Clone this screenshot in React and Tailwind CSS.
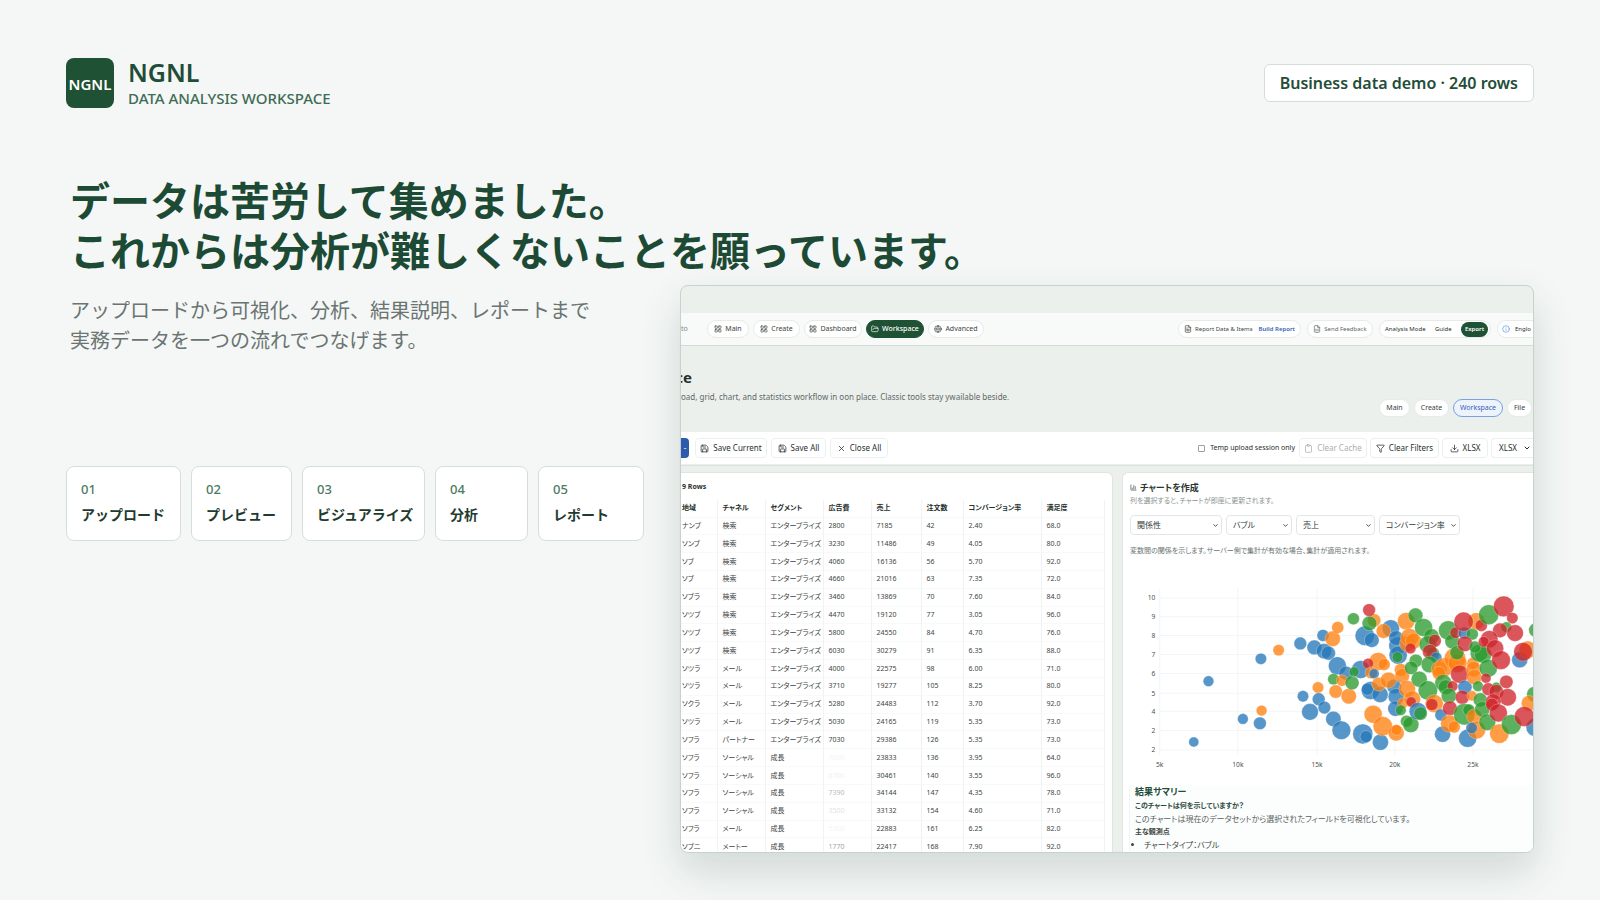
import { LayoutGrid, FolderOpen, Globe, FileText, FileSpreadsheet, Save, X, Clipboard, Funnel, Download, ChevronDown, ChartColumn, Info } from "lucide-react"

const steps = [
    { no: "01", label: "アップロード", width: "w-[115px]" },
    { no: "02", label: "プレビュー", width: "w-[101px]" },
    { no: "03", label: "ビジュアライズ", width: "w-[123px]" },
    { no: "04", label: "分析", width: "w-[93px]" },
    { no: "05", label: "レポート", width: "w-[106px]" },
]

const columns = [
    { name: "地域", width: "w-[36px]" },
    { name: "チャネル", width: "w-[48px]" },
    { name: "セグメント", width: "w-[58px]" },
    { name: "広告費", width: "w-[48px]" },
    { name: "売上", width: "w-[50px]" },
    { name: "注文数", width: "w-[42px]" },
    { name: "コンバージョン率", width: "w-[78px]" },
    { name: "満足度", width: "w-[63px]" },
]

const rows = [
    ["ナンブ", "検索", "エンタープライズ", "2800", "7185", "42", "2.40", "68.0"],
    ["ソンブ", "検索", "エンタープライズ", "3230", "11486", "49", "4.05", "80.0"],
    ["ソブ", "検索", "エンタープライズ", "4060", "16136", "56", "5.70", "92.0"],
    ["ソブ", "検索", "エンタープライズ", "4660", "21016", "63", "7.35", "72.0"],
    ["ソブラ", "検索", "エンタープライズ", "3460", "13869", "70", "7.60", "84.0"],
    ["ソツブ", "検索", "エンタープライズ", "4470", "19120", "77", "3.05", "96.0"],
    ["ソツブ", "検索", "エンタープライズ", "5800", "24550", "84", "4.70", "76.0"],
    ["ソツブ", "検索", "エンタープライズ", "6030", "30279", "91", "6.35", "88.0"],
    ["ソツラ", "メール", "エンタープライズ", "4000", "22575", "98", "6.00", "71.0"],
    ["ソツラ", "メール", "エンタープライズ", "3710", "19277", "105", "8.25", "80.0"],
    ["ソクラ", "メール", "エンタープライズ", "5280", "24483", "112", "3.70", "92.0"],
    ["ソツラ", "メール", "エンタープライズ", "5030", "24165", "119", "5.35", "73.0"],
    ["ソフラ", "パートナー", "エンタープライズ", "7030", "29386", "126", "5.35", "73.0"],
    ["ソフラ", "ソーシャル", "成長", "7000", "23833", "136", "3.95", "64.0"],
    ["ソフラ", "ソーシャル", "成長", "6700", "30461", "140", "3.55", "96.0"],
    ["ソフラ", "ソーシャル", "成長", "7390", "34144", "147", "4.35", "78.0"],
    ["ソフラ", "ソーシャル", "成長", "3500", "33132", "154", "4.60", "71.0"],
    ["ソフラ", "メール", "成長", "5300", "22883", "161", "6.25", "82.0"],
    ["ソブニ", "メートー", "成長", "1770", "22417", "168", "7.90", "92.0"],
]

const fadedRows = { 13: "text-[#f3f4f4]", 14: "text-[#f0f1f1]", 15: "text-[#b9bdbb]", 16: "text-[#e2e4e3]", 17: "text-[#f3f4f4]", 18: "text-[#a3a8a5]" }

const B = "#2576b8"
const O = "#ff7f0e"
const G = "#2a9a2c"
const R = "#cf2329"

// x, y, radius, colour
const bubbles = [
    [250, 516, 15, B], [294, 334, 16, B], [397, 447, 16, B], [448, 460, 19, B], [451, 267, 17, B], [453, 422, 16, O], [504, 241, 17, O],
    [569, 221, 19, B], [611, 233, 22, B], [637, 197, 18, B], [640, 244, 23, B], [653, 250, 21, B], [666, 207, 23, O], [681, 173, 18, O],
    [577, 379, 17, B], [622, 353, 17, O], [624, 388, 19, B], [598, 426, 25, B], [641, 413, 19, B], [668, 447, 23, B], [692, 481, 28, B],
    [756, 492, 30, B], [766, 500, 18, B], [809, 517, 24, B], [680, 288, 27, B], [706, 310, 21, B], [668, 328, 17, G], [694, 332, 17, O],
    [675, 365, 20, O], [714, 379, 23, O], [724, 339, 21, G], [750, 299, 27, B], [730, 306, 15, G], [728, 147, 18, G], [762, 198, 29, B],
    [783, 211, 22, B], [790, 152, 20, O], [776, 161, 22, G], [775, 121, 19, R], [802, 275, 27, O], [820, 284, 18, O], [772, 281, 16, R],
    [781, 309, 18, O], [790, 312, 15, B], [779, 362, 27, B], [770, 358, 18, B], [808, 374, 24, B], [804, 343, 21, O], [850, 350, 22, B],
    [833, 331, 24, O], [856, 380, 24, B], [840, 176, 26, B], [818, 184, 22, O], [860, 228, 26, B], [856, 205, 22, B], [862, 256, 27, B],
    [860, 262, 16, G], [854, 416, 23, B], [787, 433, 27, O], [816, 469, 29, O], [856, 489, 24, O], [857, 480, 16, O], [876, 400, 16, O],
    [870, 421, 16, G], [870, 300, 19, O], [874, 318, 22, O], [890, 222, 24, O], [886, 154, 26, O], [914, 137, 22, G], [896, 203, 27, O],
    [908, 214, 24, O], [938, 173, 27, G], [899, 236, 16, R], [915, 273, 20, G], [901, 294, 20, G], [889, 357, 25, O], [904, 388, 25, O],
    [901, 396, 15, R], [925, 328, 24, G], [887, 454, 18, G], [900, 464, 24, G], [921, 424, 26, B], [929, 431, 20, G], [962, 200, 23, G],
    [951, 224, 26, G], [972, 213, 19, R], [966, 252, 20, G], [957, 246, 22, R], [976, 264, 17, B], [956, 284, 25, G], [951, 362, 29, G],
    [970, 401, 27, O], [963, 404, 18, R], [990, 435, 18, B], [995, 493, 24, B], [985, 298, 24, O], [1000, 292, 28, O], [984, 310, 20, O],
    [1032, 266, 32, O], [1040, 280, 28, O], [1012, 182, 29, G], [1024, 215, 22, G], [1038, 249, 21, G], [1034, 189, 17, R],
    [1060, 190, 18, B], [1084, 193, 18, G], [1096, 154, 25, O], [1058, 156, 29, R], [1111, 167, 18, R], [1062, 222, 23, R],
    [997, 339, 25, G], [1004, 352, 22, G], [1025, 349, 16, R], [1046, 313, 27, R], [1062, 352, 21, B], [1014, 378, 23, G],
    [1054, 382, 21, R], [1017, 415, 22, R], [1015, 461, 26, O], [1030, 471, 18, O], [1070, 505, 27, B], [1060, 433, 32, G],
    [1074, 420, 18, G], [1083, 378, 15, O], [1086, 280, 18, O], [1088, 298, 23, O], [1090, 322, 23, O], [1101, 349, 16, G],
    [1090, 440, 23, O], [1097, 480, 27, O], [1082, 474, 17, B], [1104, 250, 26, G], [1116, 254, 26, G], [1092, 232, 18, G],
    [1108, 390, 21, G], [1114, 418, 23, G], [1129, 457, 25, G], [1132, 295, 27, G], [1133, 135, 30, G], [1178, 110, 31, R],
    [1204, 145, 17, R], [1186, 172, 16, G], [1167, 182, 22, R], [1212, 190, 25, R], [1135, 208, 26, R], [1118, 216, 16, R],
    [1152, 236, 26, R], [1170, 271, 28, R], [1125, 325, 15, R], [1156, 352, 15, G], [1186, 336, 20, R], [1132, 358, 19, R],
    [1156, 366, 22, R], [1190, 382, 26, R], [1147, 395, 23, R], [1143, 404, 19, R], [1162, 429, 27, R], [1165, 491, 29, O],
    [1201, 464, 30, G], [1226, 270, 24, B], [1250, 240, 26, O], [1236, 246, 28, R], [1274, 181, 21, G], [1270, 373, 23, G],
    [1254, 400, 23, O], [1272, 472, 27, B], [1240, 440, 30, R],
]

const yTicks = [["10", 85], ["9", 141], ["8", 197], ["7", 254], ["6", 311], ["5", 370], ["4", 424], ["2", 482], ["2", 540]]
const xTicks = [["5k", 148], ["10k", 382], ["15k", 619], ["20k", 852], ["25k", 1086]]

function NavPill({ icon: Icon, label, className }) {
    return (
        <a href="#" className={`flex h-[18px] shrink-0 items-center justify-center gap-[3px] rounded-full border whitespace-nowrap ${className}`}>
            {Icon && <Icon size={8} strokeWidth={2} />}
            {label}
        </a>
    )
}

function ToolButton({ icon: Icon, label, className }) {
    return (
        <button className={`flex h-5 shrink-0 items-center justify-center gap-1 rounded border border-[#eceff0] bg-white text-[8px] whitespace-nowrap ${className}`}>
            {Icon && <Icon size={9} strokeWidth={2} />}
            {label}
        </button>
    )
}

function ChartSelect({ label, value, className }) {
    return (
        <div className={`relative shrink-0 ${className}`}>
            <select aria-label={label} className="block h-5 w-full appearance-none rounded border border-[#e2e6e9] bg-white pl-[6px] text-[8px] text-[#2f3a37]">
                <option>{value}</option>
            </select>
            <ChevronDown size={7} strokeWidth={3} className="pointer-events-none absolute top-[7px] right-[3px] text-[#2f3a37]" />
        </div>
    )
}

function BubbleChart() {
    return (
        <svg viewBox="38 40 1232 560" className="block h-[187px] w-full" preserveAspectRatio="xMinYMin slice">
            {yTicks.map(([, y]) => <line key={y} x1="148" x2="1280" y1={y} y2={y} stroke="#f3f5f6" strokeWidth="3" />)}
            {xTicks.map(([, x]) => <line key={x} x1={x} x2={x} y1="55" y2="555" stroke="#f3f5f6" strokeWidth="3" />)}
            {yTicks.map(([t, y]) => <text key={y} x="135" y={y + 7} textAnchor="end" fontSize="20" fill="#4b5350">{t}</text>)}
            {xTicks.map(([t, x]) => <text key={x} x={x} y="590" textAnchor="middle" fontSize="20" fill="#4b5350">{t}</text>)}
            {bubbles.map(([x, y, r, c], i) => (
                <circle key={i} cx={x} cy={y} r={r} fill={c} fillOpacity="0.77" stroke="#fff" strokeOpacity="0.4" strokeWidth="2" />
            ))}
        </svg>
    )
}

function DataTable() {
    return (
        <section className="w-[432px] shrink-0 overflow-hidden rounded-tr-md border-t border-r border-[#dfe5e2] bg-white">
            <h3 className="flex h-[27px] items-center pt-[2px] pl-px text-[7px] font-bold">9 Rows</h3>
            <table className="h-[356px] w-[423px] table-fixed border-collapse text-[7px] leading-[10px]">
                <thead>
                    <tr className="h-[17px]">
                        {columns.map((c) => (
                            <th key={c.name} className={`h-[17px] border-r border-[#f0f2f3] p-0 pl-[5px] text-left font-bold whitespace-nowrap first:pl-px ${c.width}`}>{c.name}</th>
                        ))}
                    </tr>
                </thead>
                <tbody className="text-[#3c4543]">
                    {rows.map((row, i) => (
                        <tr key={i} className="h-[17px] border-t border-[#f8f9f9]">
                            {row.map((cell, j) => (
                                <td key={j} className={`h-[17px] border-r border-[#f0f2f3] p-0 pl-[5px] whitespace-nowrap first:pl-px ${j === 3 && fadedRows[i] ? fadedRows[i] : ""}`}>{cell}</td>
                            ))}
                        </tr>
                    ))}
                </tbody>
            </table>
        </section>
    )
}

function ChartPanel() {
    return (
        <section className="min-w-0 flex-1 overflow-hidden rounded-tl-md border-t border-l border-[#dfe5e2] bg-white">
            <div className="pt-2 pl-[7px]">
                <h3 className="flex items-center gap-[3px] text-[9px] leading-[13px] font-bold text-[#2a3532]">
                    <ChartColumn size={7} strokeWidth={2} />
                    チャートを作成
                </h3>
                <p className="mt-px text-[7px] leading-[12px] text-[#8b9391]">列を選択すると、チャートが即座に更新されます。</p>
                <div className="mt-[8px] flex gap-[4px]">
                    <ChartSelect label="分析タイプ" value="関係性" className="w-[92px]" />
                    <ChartSelect label="チャート" value="バブル" className="w-[66px]" />
                    <ChartSelect label="X軸" value="売上" className="w-[79px]" />
                    <ChartSelect label="Y軸" value="コンバージョン率" className="w-[81px]" />
                </div>
                <p className="mt-[10px] text-[7px] leading-[12px] text-[#6b7472]">変数間の関係を示します。サーバー側で集計が有効な場合、集計が適用されます。</p>
            </div>
            <div className="mt-[26px]">
                <BubbleChart />
            </div>
            <div className="mt-[15px] ml-[6px] rounded-tl border-l border-[#f1f4f3] bg-[#fcfdfd] pl-[5px] leading-[13px]">
                <h4 className="text-[9px] leading-[14px] font-bold text-[#234d38]">結果サマリー</h4>
                <p className="text-[7px] font-bold text-[#2c4a3b]">このチャートは何を示していますか？</p>
                <p className="text-[8px] text-[#59625f]">このチャートは現在のデータセットから選択されたフィールドを可視化しています。</p>
                <p className="text-[7px] font-bold text-[#3c4a44]">主な観測点</p>
                <ul className="list-disc pl-[9px] text-[8px] text-[#3c4543]">
                    <li>チャートタイプ：バブル</li>
                </ul>
            </div>
        </section>
    )
}

function AppPreview() {
    const pill = "border-[#e6ebe8] bg-white text-[#3c4543]"
    return (
        <div className="flex h-[568px] flex-col overflow-hidden rounded-lg border border-[#c6d2cc] bg-[#ebf0ed] text-[#26302d] shadow-[0_18px_40px_rgba(30,60,48,0.16)] [font-feature-settings:'palt']">
            <div className="h-[27px] shrink-0" />
            <nav className="flex h-[33px] shrink-0 items-center border-b border-[#d3dbd7] bg-[#f7faf8]">
                <span className="w-[26px] shrink-0 text-[7px] text-[#7c8583]">to</span>
                <div className="flex gap-1 text-[7px]">
                    <NavPill icon={LayoutGrid} label="Main" className={`w-[42px] ${pill}`} />
                    <NavPill icon={LayoutGrid} label="Create" className={`w-[47px] ${pill}`} />
                    <NavPill icon={LayoutGrid} label="Dashboard" className={`w-[58px] ${pill}`} />
                    <NavPill icon={FolderOpen} label="Workspace" className="w-[58px] border-[#1f5135] bg-[#1f5135] font-medium text-white" />
                    <NavPill icon={Globe} label="Advanced" className={`w-[56px] ${pill}`} />
                </div>
                <div className="ml-auto flex gap-[6px] text-[6px]">
                    <div className="flex h-[18px] w-[123px] items-center justify-center gap-[3px] rounded-full border border-[#e6ebe8] bg-white whitespace-nowrap text-[#3c4543]">
                        <FileText size={8} />
                        <span>Report Data &amp; Items</span>
                        <a href="#" className="ml-[3px] font-semibold text-[#3563b4]">Build Report</a>
                    </div>
                    <NavPill icon={FileSpreadsheet} label="Send Feedback" className="w-[66px] border-[#e6ebe8] bg-white text-[#5b6462]" />
                    <div className="flex h-[18px] w-[112px] items-center justify-between rounded-full border border-[#e6ebe8] bg-white pr-[2px] pl-[5px] whitespace-nowrap">
                        <span>Analysis Mode</span>
                        <span>Guide</span>
                        <button className="h-[15px] w-[27px] rounded-full bg-[#1f5135] font-semibold text-white">Export</button>
                    </div>
                    <div className="flex h-[18px] w-[36px] items-center gap-[5px] rounded-l-full border border-r-0 border-[#e6ebe8] bg-white pl-1">
                        <Info size={8} className="shrink-0 text-[#4a9be0]" />
                        Englo
                    </div>
                </div>
            </nav>

            <header className="flex h-[86px] shrink-0 justify-between">
                <div className="pt-[19px]">
                    <h2 className="flex w-[11px] justify-end text-[15px] leading-[24px] font-bold">ce</h2>
                    <p className="text-[8px] leading-4 whitespace-nowrap text-[#5f6866]">oad, grid, chart, and statistics workflow in oon place. Classic tools stay ywailable beside.</p>
                </div>
                <div className="flex gap-1 pt-[53px] pr-px text-[7px]">
                    <NavPill label="Main" className={`w-[31px] ${pill}`} />
                    <NavPill label="Create" className={`w-[35px] ${pill}`} />
                    <NavPill label="Workspace" className="w-[50px] border-[#7d9fe0] bg-[#edf3fd] text-[#3563b4]" />
                    <NavPill label="File" className={`w-[25px] ${pill}`} />
                </div>
            </header>

            <div className="flex h-8 shrink-0 items-center justify-between bg-white">
                <div className="flex gap-1">
                    <button aria-label="Open" className="mr-[2px] h-5 w-[8px] rounded-r bg-[#2c5cab] text-[8px] text-white">-</button>
                    <ToolButton icon={Save} label="Save Current" className="w-[72px]" />
                    <ToolButton icon={Save} label="Save All" className="w-[55px]" />
                    <ToolButton icon={X} label="Close All" className="w-[58px]" />
                </div>
                <div className="flex items-center gap-[3px]">
                    <label className="mr-px flex items-center gap-[5px] text-[7px] whitespace-nowrap">
                        <input type="checkbox" className="size-[7px] appearance-none rounded-[1px] border border-[#9aa29f]" />
                        Temp upload session only
                    </label>
                    <ToolButton icon={Clipboard} label="Clear Cache" className="w-[68px] text-[#a9afad]" />
                    <ToolButton icon={Funnel} label="Clear Filters" className="w-[69px]" />
                    <ToolButton icon={Download} label="XLSX" className="w-[46px]" />
                    <div className="relative w-[42px]">
                        <select aria-label="Format" className="block h-5 w-full appearance-none rounded-l border border-r-0 border-[#eceff0] bg-white pl-[7px] text-[8px]">
                            <option>XLSX</option>
                        </select>
                        <ChevronDown size={8} strokeWidth={3} className="pointer-events-none absolute top-[6px] right-[2px]" />
                    </div>
                </div>
            </div>

            <div className="mt-px flex min-h-0 flex-1 gap-[9px] border-t border-[#dbe2df] pt-[6px]">
                <DataTable />
                <ChartPanel />
            </div>
        </div>
    )
}

export default function App() {
    return (
        <main className="min-h-screen bg-[#f4f7f6] px-[66px] pt-[56px] pb-[47px] font-['Noto_Sans','Noto_Sans_CJK_JP',sans-serif]">
            <div className="flex items-center justify-between">
                <div className="flex items-center gap-[14px]">
                    <div className="flex h-[50px] w-12 items-center justify-center rounded-lg bg-[#1f5135] pt-[2px] text-[15px] font-semibold text-white">NGNL</div>
                    <div className="pt-[2px]">
                        <p className="text-[25px] leading-[28px] font-semibold text-[#1f4d38]">NGNL</p>
                        <p className="text-[15px] leading-[24px] font-medium text-[#3f6b55]">DATA ANALYSIS WORKSPACE</p>
                    </div>
                </div>
                <p className="rounded-md border border-[#d5ddd9] bg-white px-[15px] py-[6px] text-[16px] leading-6 font-semibold text-[#234d38]">Business data demo · 240 rows</p>
            </div>

            <h1 className="mt-[66px] pl-1 text-[40px] leading-[50px] font-bold text-[#1d4a35]">
                データは苦労して集めました。<br />
                これからは分析が難しくないことを願っています。
            </h1>

            <div className="mt-[9px] grid grid-cols-[578px_minmax(0,1fr)] gap-9">
                <div className="pt-[11px]">
                    <p className="pl-1 text-[20px] leading-[30px] text-[#6a7471]">
                        アップロードから可視化、分析、結果説明、レポートまで<br />
                        実務データを一つの流れでつなげます。
                    </p>
                    <ol className="mt-[110px] flex justify-between">
                        {steps.map((s) => (
                            <li key={s.no} className={`h-[75px] rounded-lg border border-[#d5dfda] bg-white px-[14px] pt-3 whitespace-nowrap ${s.width}`}>
                                <p className="text-[13px] leading-5 font-medium text-[#4d7a62]">{s.no}</p>
                                <p className="mt-[6px] text-[14px] leading-5 font-bold text-[#1f3b2f]">{s.label}</p>
                            </li>
                        ))}
                    </ol>
                </div>
                <AppPreview />
            </div>
        </main>
    )
}
